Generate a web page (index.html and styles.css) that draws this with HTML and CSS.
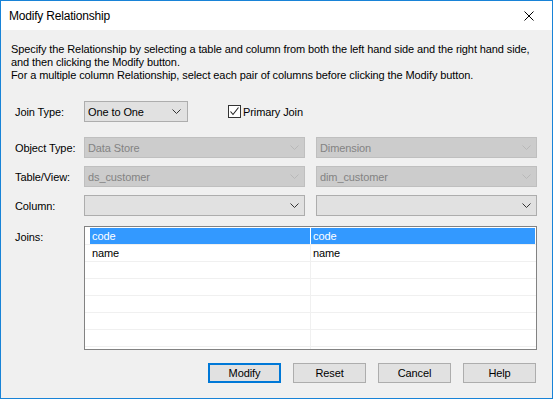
FILE: index.html
```html
<!DOCTYPE html>
<html>
<head>
<meta charset="utf-8">
<title>Modify Relationship</title>
<link rel="stylesheet" href="styles.css">
</head>
<body>
<div class="window">
  <div class="titlebar">
    <span class="title">Modify Relationship</span>
    <span class="close"><svg width="10" height="10" viewBox="0 0 10 10"><path d="M0.5 0.5 L9.5 9.5 M9.5 0.5 L0.5 9.5" stroke="#000" stroke-width="1" fill="none"/></svg></span>
  </div>
  <div class="content">
    <p class="intro">Specify the Relationship by selecting a table and column from both the left hand side and the right hand side,<br>and then clicking the Modify button.<br>For a multiple column Relationship, select each pair of columns before clicking the Modify button.</p>
    <div class="form">
      <div class="join-row">
        <span class="lbl">Join Type:</span>
        <div class="combo combo-join"><span class="val">One to One</span><svg class="chev" width="9" height="5" viewBox="0 0 9 5"><path d="M0.5 0.5 L4.5 4.5 L8.5 0.5" stroke="#333" fill="none"/></svg></div>
        <div class="check"><span class="box"><svg width="11" height="11" viewBox="0 0 11 11"><path d="M1.5 5.5 L4 8.5 L9.5 1.5" stroke="#222" stroke-width="1.1" fill="none"/></svg></span><span>Primary Join</span></div>
      </div>
      <div class="field-row">
        <span class="lbl">Object Type:</span>
        <div class="combo disabled"><span class="val">Data Store</span><svg class="chev" width="9" height="5" viewBox="0 0 9 5"><path d="M0.5 0.5 L4.5 4.5 L8.5 0.5" stroke="#b8b8b8" fill="none"/></svg></div>
        <div class="combo disabled"><span class="val">Dimension</span><svg class="chev" width="9" height="5" viewBox="0 0 9 5"><path d="M0.5 0.5 L4.5 4.5 L8.5 0.5" stroke="#b8b8b8" fill="none"/></svg></div>
      </div>
      <div class="field-row">
        <span class="lbl">Table/View:</span>
        <div class="combo disabled"><span class="val">ds_customer</span><svg class="chev" width="9" height="5" viewBox="0 0 9 5"><path d="M0.5 0.5 L4.5 4.5 L8.5 0.5" stroke="#b8b8b8" fill="none"/></svg></div>
        <div class="combo disabled"><span class="val">dim_customer</span><svg class="chev" width="9" height="5" viewBox="0 0 9 5"><path d="M0.5 0.5 L4.5 4.5 L8.5 0.5" stroke="#b8b8b8" fill="none"/></svg></div>
      </div>
      <div class="field-row">
        <span class="lbl">Column:</span>
        <div class="combo"><span class="val"></span><svg class="chev" width="9" height="5" viewBox="0 0 9 5"><path d="M0.5 0.5 L4.5 4.5 L8.5 0.5" stroke="#333" fill="none"/></svg></div>
        <div class="combo"><span class="val"></span><svg class="chev" width="9" height="5" viewBox="0 0 9 5"><path d="M0.5 0.5 L4.5 4.5 L8.5 0.5" stroke="#333" fill="none"/></svg></div>
      </div>
      <div class="field-row joins-row">
        <span class="lbl lbl-top">Joins:</span>
        <div class="listview">
          <div class="lv-row selected"><span class="sp"></span><span class="cell">code</span><span class="div"></span><span class="cell">code</span><span class="sp"></span></div>
          <div class="lv-row"><span class="sp"></span><span class="cell">name</span><span class="div"></span><span class="cell">name</span><span class="sp"></span></div>
          <div class="lv-row"><span class="sp"></span><span class="cell"></span><span class="div"></span><span class="cell"></span><span class="sp"></span></div>
          <div class="lv-row"><span class="sp"></span><span class="cell"></span><span class="div"></span><span class="cell"></span><span class="sp"></span></div>
          <div class="lv-row"><span class="sp"></span><span class="cell"></span><span class="div"></span><span class="cell"></span><span class="sp"></span></div>
          <div class="lv-row"><span class="sp"></span><span class="cell"></span><span class="div"></span><span class="cell"></span><span class="sp"></span></div>
          <div class="lv-row"><span class="sp"></span><span class="cell"></span><span class="div"></span><span class="cell"></span><span class="sp"></span></div>
          <div class="lv-row"><span class="sp"></span><span class="cell"></span><span class="div"></span><span class="cell"></span><span class="sp"></span></div>
        </div>
      </div>
    </div>
    <div class="buttons">
      <button class="btn default">Modify</button>
      <button class="btn">Reset</button>
      <button class="btn">Cancel</button>
      <button class="btn">Help</button>
    </div>
  </div>
</div>
</body>
</html>
```

FILE: styles.css
```css
* { box-sizing: border-box; }
html, body { margin: 0; padding: 0; }
body {
  width: 553px;
  height: 399px;
  font-family: "Liberation Sans", Arial, sans-serif;
  font-size: 11px;
  letter-spacing: -0.1px;
  color: #000;
  background: #f0f0f0;
}
.window {
  width: 553px;
  height: 399px;
  border: 1px solid #1883d7;
  background: #f0f0f0;
  display: flex;
  flex-direction: column;
}
.titlebar {
  flex: none;
  height: 29px;
  background: #fff;
  display: flex;
  align-items: center;
  justify-content: space-between;
}
.title {
  font-size: 12px;
  letter-spacing: -0.2px;
  padding-left: 8px;
  padding-top: 1px;
}
.close {
  width: 46px;
  height: 29px;
  display: flex;
  align-items: center;
  justify-content: center;
}
.content {
  flex: 1;
  padding: 13px 15px 15px 10px;
  display: flex;
  flex-direction: column;
}
.intro {
  margin: 0 0 19px 0;
  line-height: 13px;
  white-space: nowrap;
}
.form {
  padding-left: 4px;
  display: flex;
  flex-direction: column;
  gap: 8px;
}
.join-row {
  display: flex;
  align-items: center;
  height: 21px;
  margin-bottom: 7px;
}
.join-row .lbl { width: 69px; }
.lbl { white-space: nowrap; }
.field-row {
  display: grid;
  grid-template-columns: 58px 1fr 1fr;
  column-gap: 11px;
  align-items: center;
  height: 21px;
}
.combo {
  height: 21px;
  background: #e1e1e1;
  border: 1px solid #adadad;
  display: flex;
  align-items: center;
  justify-content: space-between;
  padding: 0 5px 0 3px;
}
.combo-join { width: 104px; padding-right: 6px; }
.combo.disabled {
  background: #cccccc;
  border-color: #bfbfbf;
  color: #838383;
}
.chev { display: block; flex: none; }
.check {
  margin-left: 40px;
  display: flex;
  align-items: center;
  gap: 2px;
}
.box {
  width: 13px;
  height: 13px;
  border: 1px solid #333;
  background: #fff;
  display: block;
}
.box svg { display: block; }
.joins-row {
  height: 124px;
  align-items: start;
  margin-top: 2px;
}
.lbl-top { margin-top: 5px; }
.listview {
  grid-column: 2 / 4;
  height: 124px;
  border: 1px solid #828282;
  background: #fff;
  overflow: hidden;
  padding-top: 1px;
}
.lv-row {
  display: grid;
  grid-template-columns: 5px 220px 1px 1fr 1px;
  height: 17px;
  border-bottom: 1px solid #f0f0f0;
}
.lv-row .cell {
  line-height: 16px;
  padding-left: 2px;
  white-space: nowrap;
}
.lv-row .div { background: #f0f0f0; }
.lv-row.selected .cell { background: #3399ff; color: #fff; }
.lv-row.selected .div { background: #fff; }
.buttons {
  margin-top: 13px;
  display: flex;
  justify-content: flex-end;
  gap: 12px;
  padding-right: 1px;
}
.btn {
  width: 73px;
  height: 20px;
  background: #e1e1e1;
  border: 1px solid #adadad;
  font-family: inherit;
  font-size: 11px;
  letter-spacing: -0.1px;
  color: #000;
  padding: 0;
  margin: 0;
}
.btn.default { border: 2px solid #0078d7; }
```
